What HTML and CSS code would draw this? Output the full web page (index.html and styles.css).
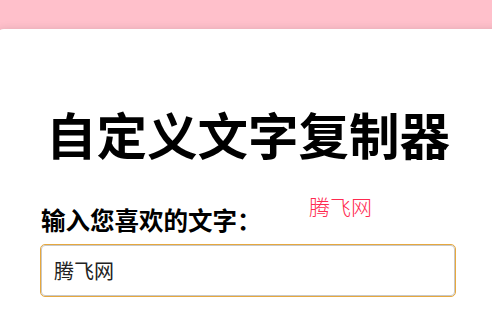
FILE: index.html
```html
<!DOCTYPE html>
<html lang="zh-CN">
<head>
<meta charset="utf-8">
<title>自定义文字复制器</title>
<link rel="stylesheet" href="styles.css">
</head>
<body>
<main class="card">
  <h1 class="title">自定义文字复制器</h1>
  <label class="label" for="txt">输入您喜欢的文字：</label>
  <input class="field" id="txt" type="text" value="腾飞网">
</main>
<span class="float-text">腾飞网</span>
</body>
</html>
```

FILE: styles.css
```css
html, body {
  margin: 0;
  padding: 0;
  overflow: hidden;
  height: 100%;
}
body {
  background: #ffc0cb;
  font-family: "Noto Sans CJK SC", "Noto Sans", sans-serif;
  color: #000;
  position: relative;
}
.card {
  box-sizing: border-box;
  width: 516px;
  min-height: calc(100vh - 29px);
  margin: 29px 0 0 -4px;
  padding: 74px 57px 0 45px;
  background: #fff;
  border-radius: 8px 8px 0 0;
  box-shadow: 0 0 8px rgba(0, 0, 0, 0.12);
  display: flex;
  flex-direction: column;
}
.title {
  margin: 0;
  font-size: 50.5px;
  line-height: 60px;
  font-weight: 700;
  text-align: center;
}
.label {
  margin-top: 42px;
  font-size: 24.5px;
  line-height: 30px;
  font-weight: 700;
}
.field {
  box-sizing: border-box;
  margin-top: 10px;
  height: 51px;
  width: 100%;
  padding: 0 12px;
  border: 1px solid #c8c8c8;
  border-radius: 4px;
  outline: 1px solid #e6a83e;
  outline-offset: 0;
  font-family: "Noto Sans CJK SC", sans-serif;
  font-size: 20px;
  color: #222;
  background: #fff;
}
.float-text {
  position: absolute;
  left: 309px;
  top: 195px;
  font-size: 21px;
  line-height: 22px;
  font-weight: 300;
  color: #ff2a50;
}
```
